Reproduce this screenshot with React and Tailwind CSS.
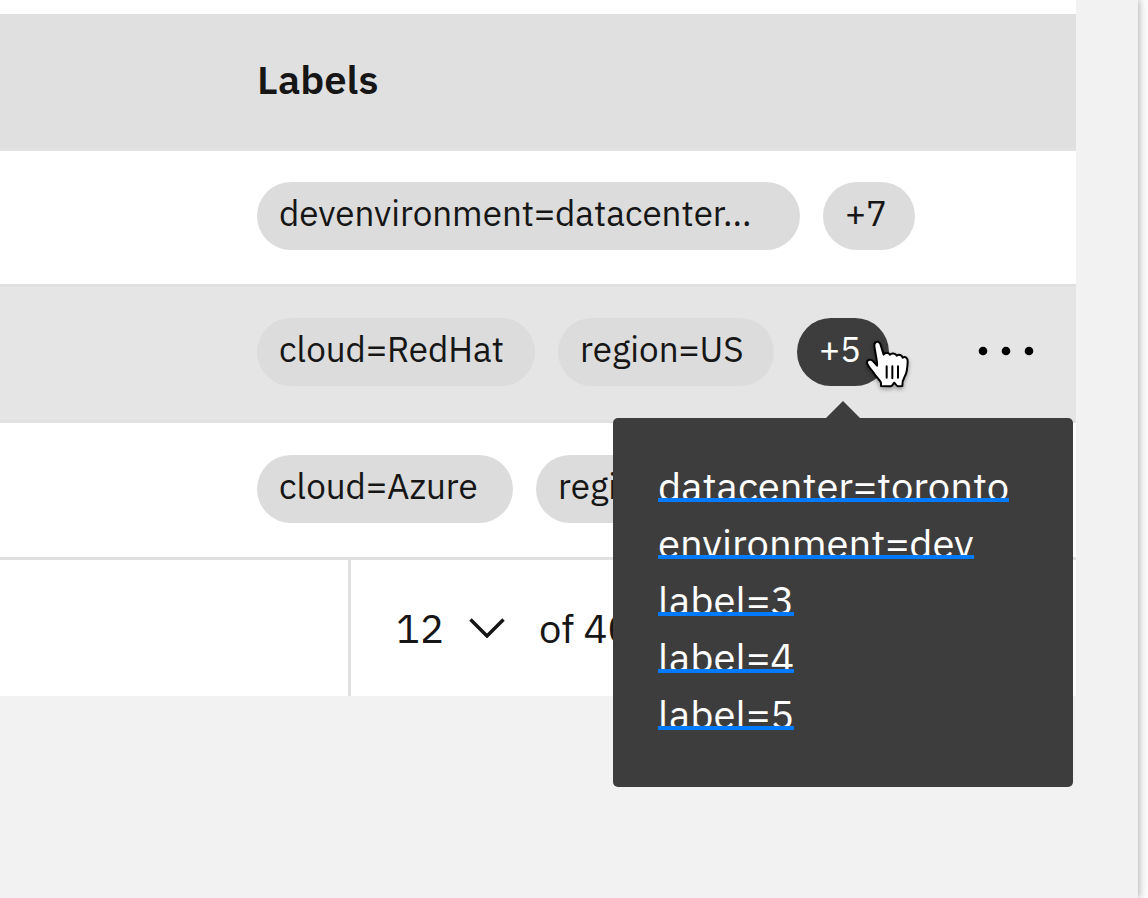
const rows = [
  { id: 'row-1', labels: [{ text: 'devenvironment=datacenter...', width: 'w-[543px]' }], more: 7 },
  {
    id: 'row-2',
    labels: [
      { text: 'cloud=RedHat', width: 'w-[278px]' },
      { text: 'region=US', width: 'w-[216px]' },
    ],
    more: 5,
    open: true,
  },
  {
    id: 'row-3',
    labels: [
      { text: 'cloud=Azure', width: 'w-[256px]' },
      { text: 'region=EU', width: 'w-[216px]' },
    ],
    more: 0,
  },
];

const overflowLabels = ['datacenter=toronto', 'environment=dev', 'label=3', 'label=4', 'label=5'];

function Tag({ width, children }) {
  return (
    <span
      className={`flex h-[68px] items-center whitespace-nowrap rounded-full bg-[#dcdcdc] pb-[6px] pl-[22px] text-[35px] leading-10 ${width}`}
    >
      {children}
    </span>
  );
}

function PointerCursor() {
  return (
    <svg
      aria-hidden="true"
      viewBox="255 120 135 150"
      className="pointer-events-none absolute left-[68px] top-[22px] h-[50px] w-[45px] overflow-visible drop-shadow-[0_2px_2px_rgba(0,0,0,0.35)]"
    >
      <path
        d="M303 258V249C301 241 292 235 284 223C277 211 261 198 261 187C262 178 273 177 279 183L291 197C294 192 285 157 283 137C282 124 297 121 301 132L311 164C314 158 326 157 330 164C335 158 347 160 350 167C356 162 366 165 368 173C376 168 384 175 383 185C382 203 382 214 376 226C370 237 366 242 367 258L354 259C350 259 347 252 343 248C339 251 337 259 332 259Z"
        fill="#fff"
        stroke="#000"
        strokeWidth="6"
        strokeLinejoin="round"
      />
      <path d="M320 199V233M337 199V235M354 199V233" fill="none" stroke="#000" strokeWidth="6" strokeLinecap="round" />
    </svg>
  );
}

function MoreTag({ count, open }) {
  if (!open) {
    return (
      <button
        type="button"
        className="flex h-[68px] w-[92px] items-center rounded-full bg-[#dcdcdc] pb-[6px] pl-[22px] text-[35px] leading-10"
      >
        +{count}
      </button>
    );
  }
  return (
    <div className="relative">
      <button
        type="button"
        aria-expanded="true"
        aria-controls="more-labels"
        className="flex h-[68px] w-[92px] items-center rounded-full bg-[#3d3d3d] pb-[6px] pl-[22px] text-[35px] leading-10 text-white"
      >
        +{count}
      </button>
      <PointerCursor />
      <div
        id="more-labels"
        className="absolute left-1/2 top-[100px] z-10 w-[460px] -translate-x-1/2 rounded-[5px] bg-[#3d3d3d] px-[45px] pb-[57px] pt-[39px] text-white"
      >
        <svg aria-hidden="true" viewBox="0 0 34 17" className="absolute -top-[17px] left-1/2 h-[17px] w-[34px] -translate-x-1/2">
          <path d="M0 17L17 0L34 17Z" fill="#3d3d3d" />
        </svg>
        <ul className="flex flex-col items-start gap-3">
          {overflowLabels.map((label) => (
            <li key={label} className="flex">
              <a
                href="#more-labels"
                className="block h-[45px] overflow-hidden whitespace-nowrap border-b-4 border-[#007aff] text-[40px] leading-[58px]"
              >
                {label}
              </a>
            </li>
          ))}
        </ul>
      </div>
    </div>
  );
}

export default function App() {
  return (
    <div className="min-h-screen overflow-hidden bg-[#fafafa] pr-[10px] font-['IBM_Plex_Sans','Noto_Sans',sans-serif] text-[#161616]">
      <main className="min-h-screen bg-[#f2f2f2] pr-[62px] shadow-[1px_0_7px_rgba(0,0,0,0.3)]">
        <div className="bg-white pt-[14px]">
          <table className="w-full table-fixed border-separate border-spacing-0">
            <colgroup>
              <col className="w-[211px]" />
              <col />
              <col className="w-[140px]" />
            </colgroup>
            <thead>
              <tr className="h-[137px] bg-[#e0e0e0]">
                <td className="border-b-3 border-[#e2e2e2]" />
                <th scope="col" className="border-b-3 border-[#e2e2e2] pb-[5px] pl-[46px] text-left text-[40px] font-semibold leading-[48px]">
                  Labels
                </th>
                <td className="border-b-3 border-[#e2e2e2]" />
              </tr>
            </thead>
            <tbody>
              {rows.map((row) => (
                <tr key={row.id} className={row.open ? 'h-[136px] bg-[#e5e5e5]' : 'h-[136px] last:h-[137px]'}>
                  <td className="border-b-3 border-[#e0e0e0]" />
                  <td className="border-b-3 border-[#e0e0e0] pb-[3px] pl-[46px]">
                    <div className="flex items-center gap-[23px]">
                      {row.labels.map((label) => (
                        <Tag key={label.text} width={label.width}>
                          {label.text}
                        </Tag>
                      ))}
                      {row.more > 0 && <MoreTag count={row.more} open={row.open} />}
                    </div>
                  </td>
                  <td className="border-b-3 border-[#e0e0e0] pb-[5px]">
                    {row.open && (
                      <button type="button" aria-label="Row actions" className="mx-auto flex items-center">
                        <svg aria-hidden="true" viewBox="0 0 56 10" className="h-[10px] w-[56px]">
                          <circle cx="5" cy="5" r="4.3" />
                          <circle cx="28" cy="5" r="4.3" />
                          <circle cx="51" cy="5" r="4.3" />
                        </svg>
                      </button>
                    )}
                  </td>
                </tr>
              ))}
            </tbody>
          </table>
          <nav aria-label="Pagination" className="flex h-[136px] pl-[348px]">
            <div className="flex items-center border-l-3 border-[#e0e0e0] pl-[45px] text-[40px]">
              <div className="relative flex items-center">
                <select aria-label="Page" defaultValue="12" className="h-[60px] w-[112px] appearance-none bg-transparent leading-[56px]">
                  <option>12</option>
                  <option>13</option>
                </select>
                <svg aria-hidden="true" viewBox="0 0 36 20" className="pointer-events-none absolute right-[3px] h-5 w-9">
                  <path d="M1.500 1.500L18 18L34.500 1.500" fill="none" stroke="#161616" strokeWidth="3.5" />
                </svg>
              </div>
              <span className="whitespace-nowrap pl-[31px] leading-[56px]">of 40</span>
            </div>
          </nav>
        </div>
      </main>
    </div>
  );
}
